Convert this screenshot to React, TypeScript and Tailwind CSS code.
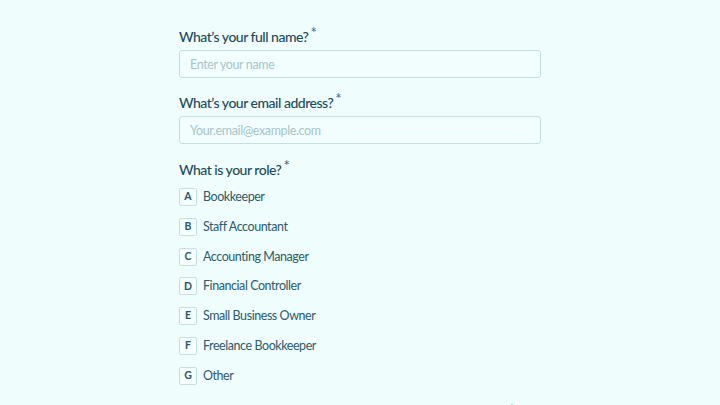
import React from "react";

const roles = [
  { key: "A", label: "Bookkeeper" },
  { key: "B", label: "Staff Accountant" },
  { key: "C", label: "Accounting Manager" },
  { key: "D", label: "Financial Controller" },
  { key: "E", label: "Small Business Owner" },
  { key: "F", label: "Freelance Bookkeeper" },
  { key: "G", label: "Other" },
];

function Label({ children }: { children: React.ReactNode }) {
  return (
    <label className="block text-[14px] font-medium leading-5 tracking-[-0.035em] text-[#1d4b5c]">
      {children}
      <span className="relative -top-[4px] ml-[2px] text-[15px] leading-none text-[#4f7a88]">*</span>
    </label>
  );
}

export default function App() {
  return (
    <div
      className="min-h-[405px] w-full overflow-hidden bg-[#effdfd]"
      style={{ fontFamily: "Lato, 'Noto Sans', sans-serif" }}
    >
      <form className="mx-auto flex w-[362px] flex-col pt-[27px]">
        {/* Name */}
        <Label>What’s your full name?</Label>
        <input
          type="text"
          placeholder="Enter your name"
          className="mt-[3px] h-[28px] w-full rounded-[3px] border border-[#c6e0e2] bg-[#f2fefe] px-[10px] text-[12.5px] tracking-[-0.03em] text-[#1d4b5c] outline-none placeholder:text-[#a7c5c9]"
        />

        {/* Email */}
        <div className="mt-[15px]">
          <Label>What’s your email address?</Label>
        </div>
        <input
          type="email"
          placeholder="Your.email@example.com"
          className="mt-[3px] h-[28px] w-full rounded-[3px] border border-[#c6e0e2] bg-[#f2fefe] px-[10px] text-[12.5px] tracking-[-0.03em] text-[#1d4b5c] outline-none placeholder:text-[#a7c5c9]"
        />

        {/* Role */}
        <div className="mt-[16px]">
          <Label>What is your role?</Label>
        </div>
        <div className="mt-[8px] flex flex-col gap-[11.8px]">
          {roles.map((r) => (
            <div key={r.key} className="flex items-center gap-[6px]">
              <span className="flex h-[18px] w-[18px] items-center justify-center rounded-[2px] border border-[#c6e0e2] bg-[#f5fefe] text-[10.5px] font-bold text-[#2a5666]">
                {r.key}
              </span>
              <span className="text-[12.5px] leading-[18px] tracking-[-0.035em] text-[#2e5a69]">{r.label}</span>
            </div>
          ))}
        </div>

        {/* Next question (cut off) */}
        <div className="mt-[17px] flex justify-end pr-[26px]">
          <span className="text-[15px] leading-none text-[#4f7a88]">*</span>
        </div>
      </form>
    </div>
  );
}
